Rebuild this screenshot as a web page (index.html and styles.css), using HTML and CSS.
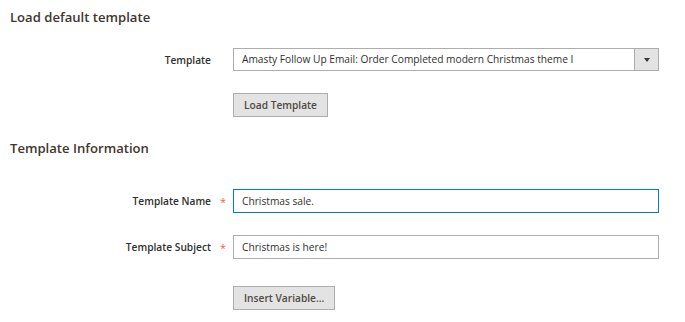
FILE: index.html
```html
<!DOCTYPE html>
<html lang="en">
<head>
  <meta charset="UTF-8" />
  <title>Template</title>
  <link rel="stylesheet" href="styles.css">
</head>
<body>
  <div class="page">
    <section class="section">
      <h2 class="legend">Load default template</h2>
      <div class="field">
        <label class="field-label" for="template">Template</label>
        <span class="field-star"></span>
        <div class="select" id="template">
          <span class="select-value">Amasty Follow Up Email: Order Completed modern Christmas theme I</span>
          <span class="select-arrow"></span>
        </div>
      </div>
      <div class="field">
        <span></span>
        <span></span>
        <div><button class="btn">Load Template</button></div>
      </div>
    </section>

    <section class="section section-info">
      <h2 class="legend">Template Information</h2>
      <div class="field">
        <label class="field-label" for="template-name">Template Name</label>
        <span class="field-star">*</span>
        <input class="input input-focus" id="template-name" type="text" value="Christmas sale.">
      </div>
      <div class="field field-before-action">
        <label class="field-label" for="template-subject">Template Subject</label>
        <span class="field-star">*</span>
        <input class="input" id="template-subject" type="text" value="Christmas is here!">
      </div>
      <div class="field">
        <span></span>
        <span></span>
        <div><button class="btn">Insert Variable...</button></div>
      </div>
    </section>
  </div>
</body>
</html>
```

FILE: styles.css
```css
* {
  margin: 0;
  padding: 0;
  box-sizing: border-box;
}

body {
  font-family: 'Open Sans', sans-serif;
  background: #fff;
  color: #303030;
  font-size: 10.2px;
}

.page {
  padding: 8px 10px 0;
}

.legend {
  font-size: 13.1px;
  font-weight: 600;
  color: #41362f;
  line-height: 19px;
  margin-bottom: 21px;
}

.section-info .legend {
  margin-bottom: 31px;
}

.field {
  display: grid;
  grid-template-columns: 201px 22px 426px;
  align-items: center;
  margin-bottom: 22px;
}

.field-before-action {
  margin-bottom: 27px;
}

.field-label {
  text-align: right;
  font-weight: 600;
  color: #303030;
}

.field-star {
  color: #e8624f;
  font-size: 11px;
  text-align: center;
  padding-left: 2px;
}

.select {
  display: flex;
  height: 23px;
  border: 1px solid #adadad;
  background: #fff;
}

.select-value {
  flex: 1;
  padding: 0 8px;
  line-height: 21px;
  white-space: nowrap;
  overflow: hidden;
}

.select-arrow {
  width: 24px;
  background: #e3e3e3;
  border-left: 1px solid #adadad;
  display: flex;
  align-items: center;
  justify-content: center;
}

.select-arrow::after {
  content: '';
  border-left: 3px solid transparent;
  border-right: 3px solid transparent;
  border-top: 4px solid #41362f;
}

.input {
  display: block;
  height: 24px;
  border: 1px solid #adadad;
  padding: 0 8px;
  font-family: 'Open Sans', sans-serif;
  font-size: 10.2px;
  color: #303030;
  width: 100%;
  outline: none;
}

.input-focus {
  border-color: #007bdb;
}

.btn {
  display: block;
  height: 24px;
  padding: 0 10px;
  background: #e3e3e3;
  border: 1px solid #adadad;
  font-family: 'Open Sans', sans-serif;
  font-size: 10.2px;
  font-weight: 600;
  color: #514943;
}
```
